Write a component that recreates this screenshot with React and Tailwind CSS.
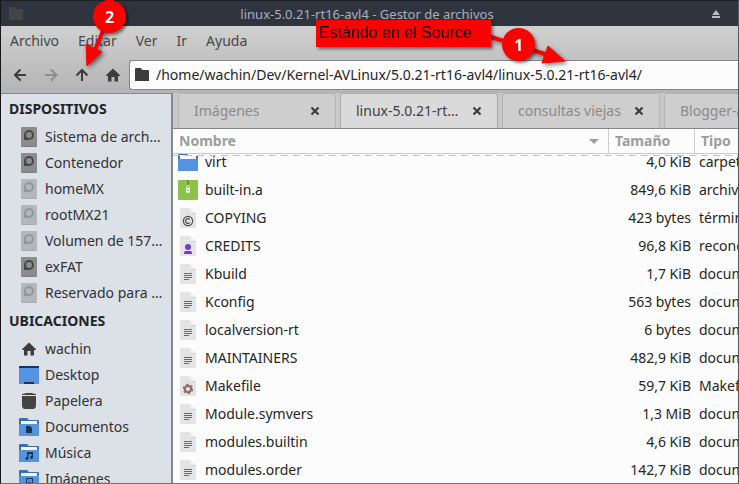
import React from "react";

const drives = [
  { name: "Sistema de archivos", mounted: true },
  { name: "Contenedor", mounted: true },
  { name: "homeMX", mounted: false },
  { name: "rootMX21", mounted: false },
  { name: "Volumen de 157 GB", mounted: false },
  { name: "exFAT", mounted: true },
  { name: "Reservado para el sistema", mounted: false },
];

const places = [
  { name: "wachin", icon: "home" },
  { name: "Desktop", icon: "desktop" },
  { name: "Papelera", icon: "trash" },
  { name: "Documentos", icon: "documents" },
  { name: "Música", icon: "music" },
  { name: "Imágenes", icon: "pictures" },
];

const tabs = [
  { name: "Imágenes", active: false },
  { name: "linux-5.0.21-rt16-avl4", active: true },
  { name: "consultas viejas", active: false },
  { name: "Blogger-avl", active: false },
];

const files = [
  { name: "virt", icon: "folder", size: "4,0 KiB", type: "carpeta" },
  { name: "built-in.a", icon: "archive", size: "849,6 KiB", type: "archivador" },
  { name: "COPYING", icon: "copying", size: "423 bytes", type: "términos" },
  { name: "CREDITS", icon: "credits", size: "96,8 KiB", type: "reconocimientos" },
  { name: "Kbuild", icon: "text", size: "1,7 KiB", type: "documento" },
  { name: "Kconfig", icon: "text", size: "563 bytes", type: "documento" },
  { name: "localversion-rt", icon: "text", size: "6 bytes", type: "documento" },
  { name: "MAINTAINERS", icon: "text", size: "482,9 KiB", type: "documento" },
  { name: "Makefile", icon: "make", size: "59,7 KiB", type: "Makefile" },
  { name: "Module.symvers", icon: "text", size: "1,3 MiB", type: "documento" },
  { name: "modules.builtin", icon: "text", size: "4,6 KiB", type: "documento" },
  { name: "modules.order", icon: "text", size: "142,7 KiB", type: "documento" },
];

function DriveIcon({ mounted }) {
  const body = mounted ? "#8c8c8c" : "#b3b7ba";
  const ring = mounted ? "#474747" : "#92979a";
  return (
    <svg className="size-5 shrink-0" viewBox="0 0 20 20" aria-hidden="true">
      <rect x="2" y="1" width="16" height="19" rx="1" fill={mounted ? "#7b7b7b" : "#a8acaf"} />
      <rect x="2" y="0" width="16" height="19" rx="1" fill={body} />
      <path d="M5 13V8a5 5 0 1 1 5 5z" fill={ring} />
      <circle cx="10" cy="8" r="3" fill={body} />
    </svg>
  );
}

function HomeIcon() {
  return (
    <svg className="size-5 shrink-0" viewBox="0 0 20 20" fill="#3c3c3c" aria-hidden="true">
      <path d="M10 3.5 17 10.2V11h-2v5.5h-3.5V12h-3v4.5H5V11H3v-.8z" />
    </svg>
  );
}

function FolderGlyph() {
  return (
    <>
      <path d="M0 19V2a1 1 0 0 1 1-1h7l2 2h9a1 1 0 0 1 1 1v15z" fill="#3f6fad" />
      <rect x="2" y="4" width="16" height="5" fill="#f3f5f7" />
      <path d="M0 7h18l2-1v12a1 1 0 0 1-1 1H1a1 1 0 0 1-1-1z" fill="#5294e2" />
    </>
  );
}

function PlaceIcon({ kind }) {
  if (kind === "home") return <HomeIcon />;
  if (kind === "desktop") {
    return (
      <svg className="size-5 shrink-0" viewBox="0 0 20 20" aria-hidden="true">
        <rect y="1" width="20" height="18" fill="#5294e2" />
        <rect y="1" width="20" height="2" fill="#22344d" />
        <rect x="5" y="17" width="10" height="2" fill="#22344d" />
      </svg>
    );
  }
  if (kind === "trash") {
    return (
      <svg className="size-5 shrink-0" viewBox="0 0 20 20" fill="#444" aria-hidden="true">
        <path d="M3 4V3l3-.5L7 2h6l1 .5 3 .5v1zM3 5h14v9q0 4-3 4H6q-3 0-3-4z" />
      </svg>
    );
  }
  return (
    <svg className="size-5 shrink-0" viewBox="0 0 20 20" aria-hidden="true">
      <FolderGlyph />
      {kind === "documents" && <path d="M7 9h4l2 2v5H7z" fill="#1d3350" />}
      {kind === "music" && (
        <path d="M8 9h6v5.500a1.500 1.500 0 1 1-1.300-1.500V11H9.500v4.500A1.500 1.500 0 1 1 8 14z" fill="#1d3350" />
      )}
      {kind === "pictures" && (
        <path fillRule="evenodd" d="M7 9h7v7H7zM8 10v4l2-1 2 1 1-1v-3z" fill="#1d3350" />
      )}
    </svg>
  );
}

function FileIcon({ kind }) {
  if (kind === "folder") {
    return (
      <svg className="size-5 shrink-0" viewBox="0 0 20 20" aria-hidden="true">
        <FolderGlyph />
      </svg>
    );
  }
  if (kind === "archive") {
    return (
      <svg className="size-5 shrink-0" viewBox="0 0 20 20" aria-hidden="true">
        <rect width="20" height="20" rx="1" fill="#8bc34a" />
        <path d="M9 0h1v1H9zM10 1h1v1h-1zM9 2h1v1H9zM10 3h1v1h-1zM9 4h1v1H9z" fill="#45652a" />
        <path fillRule="evenodd" d="M9 5h2l1 4v2q0 2-2 2t-2-2V9zM9.300 6v2h1.400V6zM9.200 9.500V11h1.600V9.500z" fill="#f4f8ee" />
      </svg>
    );
  }
  return (
    <svg className="size-5 shrink-0" viewBox="0 0 20 20" aria-hidden="true">
      <path d="M2 1a1 1 0 0 1 1-1h9l6 6v13a1 1 0 0 1-1 1H3a1 1 0 0 1-1-1z" fill="#e4e4e4" />
      <path d="M12 0v5l1 1h5z" fill="#f1f1f1" />
      <path d="M12 5.500h6" stroke="#cfcfcf" />
      {kind === "text" && (
        <path d="M6 9.500h8M6 11.500h8M6 13.500h8M6 15.500h5" stroke="#6a6a6a" />
      )}
      {kind === "copying" && (
        <g fill="none" stroke="#4a4a4a" strokeWidth="1.200">
          <circle cx="10" cy="13" r="4.600" />
          <path d="M11.800 11.400a2.400 2.400 0 1 0 0 3.200" />
        </g>
      )}
      {kind === "credits" && (
        <path d="M7 11a3 3 0 1 1 6 0 3 3 0 1 1-6 0M6 18v-1q0-2 2-2h4q2 0 2 2v1z" fill="#7239d3" />
      )}
      {kind === "make" && (
        <g fill="none" stroke="#8d6e63">
          <circle cx="10" cy="13" r="3.200" strokeWidth="2.200" />
          <circle cx="10" cy="13" r="4.600" strokeWidth="1.200" strokeDasharray="2.400 2.417" />
        </g>
      )}
    </svg>
  );
}

function ArrowIcon({ path, dim }) {
  return (
    <svg
      className="size-5"
      viewBox="0 0 20 20"
      fill="none"
      stroke={dim ? "#8b8b8b" : "#3c3c3c"}
      strokeWidth="2"
      aria-hidden="true"
    >
      <path d={path} />
    </svg>
  );
}

function TitleBar() {
  return (
    <header className="flex h-[27px] items-center justify-between border-t border-[#1c1f26] bg-[#2f343f] pl-[7px] pr-2">
      <svg className="h-4 w-4" viewBox="0 0 16 16" fill="#444444" aria-hidden="true">
        <path d="M1 14V2q0-1 1-1h4.500l2 2H14q1 0 1 1v10z" />
      </svg>
      <h1 className="text-[13px] leading-5 text-[#a9b0bd]">linux-5.0.21-rt16-avl4 - Gestor de archivos</h1>
      <button type="button" aria-label="Menú de la ventana" className="mr-2">
        <svg className="h-3 w-3" viewBox="0 0 12 12" fill="#b4bac6">
          <path d="M2 7 6 2l4 5zM2 8h8v2H2z" />
        </svg>
      </button>
    </header>
  );
}

function Toolbar() {
  return (
    <div className="flex h-[38px] items-center pb-[2px] pt-[3px]">
      <div className="flex shrink-0 items-center gap-[11px] pl-[9px]">
        <button type="button" aria-label="Atrás"><ArrowIcon path="M16 10H5.500M10.500 4.500 5 10l5.500 5.500" /></button>
        <button type="button" aria-label="Adelante"><ArrowIcon dim path="M4 10h11M10 4.500l5.500 5.500-5.500 5.500" /></button>
        <button type="button" aria-label="Subir"><ArrowIcon path="M10 16V5M4.500 10.500 10 5l5.500 5.500" /></button>
        <button type="button" aria-label="Carpeta personal"><HomeIcon /></button>
      </div>
      <label className="ml-[6px] flex h-[30px] grow items-center rounded-l-[3px] border border-r-0 border-[#858585] bg-[#fcfcfc] pl-[4px]">
        <svg className="h-4 w-4 shrink-0" viewBox="0 0 16 16" fill="#3c3c3c" aria-hidden="true">
          <path d="M1 14V2q0-1 1-1h4.500l2 2H14q1 0 1 1v10z" />
        </svg>
        <span className="sr-only">Ubicación</span>
        <input
          className="ml-[6px] h-5 w-full min-w-0 bg-transparent text-sm leading-5 text-[#262626] outline-none"
          defaultValue="/home/wachin/Dev/Kernel-AVLinux/5.0.21-rt16-avl4/linux-5.0.21-rt16-avl4/"
        />
      </label>
    </div>
  );
}

function SideRow({ icon, name }) {
  return (
    <li>
      <a href="#" className="flex h-[26px] items-center gap-[6px] pl-[18px] pr-2">
        {icon}
        <span className="truncate">{name}</span>
      </a>
    </li>
  );
}

function Sidebar() {
  return (
    <nav className="w-[172px] shrink-0 overflow-hidden border-r-2 border-t border-r-[#85888c] border-t-[#85888c] bg-[#dce0e7] text-sm text-[#303234]">
      <h2 className="flex h-[30px] items-center pl-2 font-bold text-[#232527]">DISPOSITIVOS</h2>
      <ul>
        {drives.map((d) => (
          <SideRow key={d.name} name={d.name} icon={<DriveIcon mounted={d.mounted} />} />
        ))}
      </ul>
      <h2 className="flex h-[30px] items-center pl-2 font-bold text-[#232527]">UBICACIONES</h2>
      <ul>
        {places.map((p) => (
          <SideRow key={p.name} name={p.name} icon={<PlaceIcon kind={p.icon} />} />
        ))}
      </ul>
    </nav>
  );
}

function Tabs() {
  return (
    <div className="flex h-9 shrink-0 gap-1 overflow-hidden border-b border-[#858585] bg-[#c8c8c8] pl-[5px]">
      {tabs.map((t) => (
        <div
          key={t.name}
          className={
            "flex w-[158px] shrink-0 items-center justify-between gap-2 rounded-t-[3px] border border-b-0 pl-[15px] pr-[14px] text-sm " +
            (t.active ? "border-[#aaaaaa] bg-[#dadada] text-[#404040]" : "border-[#b4b4b4] bg-[#cecece] text-[#8a8a8a]")
          }
        >
          <button type="button" className="truncate">{t.name}</button>
          <button type="button" aria-label={"Cerrar " + t.name} className="shrink-0">
            <svg className="h-3 w-3" viewBox="0 0 12 12" stroke="#3c3c3c" strokeWidth="2.200" fill="none">
              <path d="m2.500 2.500 7 7m0-7-7 7" />
            </svg>
          </button>
        </div>
      ))}
    </div>
  );
}

function FileList() {
  const scrollToOffset = (el) => {
    if (el) el.scrollTop = 6;
  };
  const head = "sticky top-0 z-10 h-[25px] border-b border-[#cccccc] bg-[#fcfcfc] text-left font-bold text-[#9c9c9c] p-0";
  return (
    <div className="relative min-h-0 grow bg-[#fcfcfc]">
      <div ref={scrollToOffset} className="h-full overflow-hidden">
        <table className="mb-2 w-full table-fixed border-separate border-spacing-0 text-sm text-[#262626]">
          <thead>
            <tr>
              <th className={head}>
                <div className="flex items-center justify-between pl-[6px] pr-[9px]">
                  Nombre
                  <svg className="h-[5px] w-[10px]" viewBox="0 0 10 5" fill="#9c9c9c" aria-hidden="true">
                    <path d="M0 0h10L5 5z" />
                  </svg>
                </div>
              </th>
              <th className={head + " w-[86px]"}>
                <div className="flex h-6 items-center border-l border-[#cccccc] pl-[6px]">Tamaño</div>
              </th>
              <th className={head + " w-[44px]"}>
                <div className="flex h-6 items-center border-l border-[#cccccc] pl-[6px]">Tipo</div>
              </th>
            </tr>
          </thead>
          <tbody>
            {files.map((f) => (
              <tr key={f.name}>
                <td className="h-7 p-0">
                  <div className="flex items-center gap-[7px] pl-[5px]">
                    <FileIcon kind={f.icon} />
                    {f.name}
                  </div>
                </td>
                <td className="h-7 py-0 pl-0 pr-[3px] text-right">{f.size}</td>
                <td className="h-7 overflow-hidden whitespace-nowrap py-0 pl-[5px] pr-0">{f.type}</td>
              </tr>
            ))}
          </tbody>
        </table>
      </div>
      <div className="absolute inset-x-0 top-[26px] z-20 h-px bg-[repeating-linear-gradient(90deg,#c4c4c4_0_7px,#fcfcfc_7px_12px)]" />
    </div>
  );
}

function Annotations() {
  return (
    <div className="pointer-events-none absolute inset-y-0 -left-px right-0 z-30">
      <svg
        className="absolute left-0 top-0 h-[100px] w-[600px] drop-shadow-[2px_2px_2px_rgba(0,0,0,0.5)]"
        viewBox="0 0 600 100"
        fill="#ff0000"
        stroke="#ff0000"
        aria-hidden="true"
      >
        <path d="M109 17 94 52M488 36l60 19" strokeWidth="4" />
        <path d="m86 44 16 8-15 14zM548 46l17 15-23 2z" strokeLinejoin="round" strokeWidth="1" />
      </svg>
      <div className="absolute left-[316px] top-5 h-[27px] w-[175px] bg-[#ff0000] pl-[3px] font-['Liberation_Sans',sans-serif] text-base leading-[26px] text-black shadow-[2px_2px_3px_rgba(0,0,0,0.5)]">
        Estándo en el Source
      </div>
      <div className="absolute left-[93px] top-0 flex size-[33px] items-center justify-center rounded-full bg-[#ff0000] font-['Open_Sans',sans-serif] text-base font-bold text-white shadow-[2px_2px_3px_rgba(0,0,0,0.5)]">
        2
      </div>
      <div className="absolute left-[502px] top-[28px] flex size-[33px] items-center justify-center rounded-full bg-[#ff0000] font-['Open_Sans',sans-serif] text-base font-bold text-white shadow-[2px_2px_3px_rgba(0,0,0,0.5)]">
        1
      </div>
    </div>
  );
}

export default function App() {
  return (
    <div className="relative flex h-screen flex-col overflow-hidden border-x border-b border-l-[#15171c] border-r-[#55585e] border-b-[#707274] bg-[#b6b6b6] font-['Noto_Sans',sans-serif]">
      <TitleBar />
      <div className="bg-linear-to-b from-[#d0d0d0] to-[#b4b4b4]">
        <nav className="flex h-[29px] items-center gap-[19px] pl-[9px] text-sm text-[#474747]">
          <button type="button">Archivo</button>
          <button type="button">Editar</button>
          <button type="button">Ver</button>
          <button type="button">Ir</button>
          <button type="button">Ayuda</button>
        </nav>
        <Toolbar />
      </div>
      <div className="flex min-h-0 grow">
        <Sidebar />
        <main className="flex min-w-0 grow flex-col">
          <Tabs />
          <FileList />
        </main>
      </div>
      <Annotations />
    </div>
  );
}
